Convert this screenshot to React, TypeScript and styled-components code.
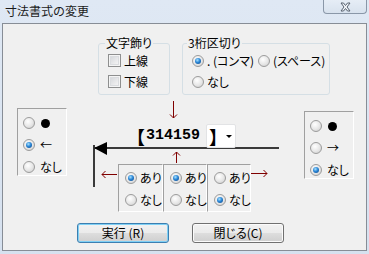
import React from "react";
import styled, { createGlobalStyle } from "styled-components";

const GlobalStyle = createGlobalStyle`
  html, body {
    margin: 0;
    padding: 0;
    background: #d9e4f1;
  }
  body {
    font-family: "Noto Sans CJK JP", "DejaVu Sans", sans-serif;
    font-size: 12px;
    font-feature-settings: "palt";
    color: #000;
  }
`;

const Window = styled.div`
  width: 369px;
  height: 254px;
  background: linear-gradient(180deg, #dfe8f4 0%, #d6e1ef 100%);
  display: flex;
  flex-direction: column;
`;

const TitleBar = styled.div`
  height: 23px;
  display: flex;
  align-items: flex-start;
  flex: none;
`;

const Title = styled.div`
  padding: 3px 0 0 5px;
  line-height: 16px;
  font-size: 12px;
  font-feature-settings: normal;
  color: #1a1a1a;
  flex: 1;
`;

const CloseBtn = styled.div`
  width: 44px;
  height: 14px;
  margin-right: 2px;
  box-sizing: border-box;
  border: 1px solid #8a97a8;
  border-top: none;
  border-radius: 0 0 4px 4px;
  background: linear-gradient(180deg, #e6edf6, #d8e2ee);
  display: flex;
  align-items: center;
  justify-content: center;
`;

const Panel = styled.div`
  margin: 0 2px;
  width: 365px;
  height: 228px;
  box-sizing: border-box;
  border: 1px solid #878d96;
  background: #f0f0f0;
  display: flex;
  flex-direction: column;
`;

const TopRow = styled.div`
  margin-top: 19px;
  padding-left: 95px;
  display: flex;
  gap: 12px;
  flex: none;
`;

const Group = styled.div<{ $w: number }>`
  position: relative;
  width: ${(p) => p.$w}px;
  height: 52px;
  box-sizing: border-box;
  border: 1px solid #d5dfe5;
  border-radius: 3px;
  padding: 6px 0 0 9px;
`;

const Caption = styled.span<{ $x: number }>`
  position: absolute;
  top: -8px;
  left: ${(p) => p.$x}px;
  line-height: 14px;
  padding: 0 1px;
  background: #f0f0f0;
`;

const OptRow = styled.div<{ $gap?: number }>`
  height: 21px;
  display: flex;
  align-items: center;
  line-height: 14px;
  white-space: nowrap;
  gap: ${(p) => p.$gap ?? 3}px;
`;

const Check = styled.span`
  width: 13px;
  height: 13px;
  box-sizing: border-box;
  border: 1px solid #8e8f8f;
  background: linear-gradient(135deg, #cfd2d6 0%, #eeeeef 70%, #f7f7f7 100%);
  box-shadow: inset 0 0 0 1px #f4f4f4, inset 0 0 0 2px #dadcdf;
  flex: none;
`;

const Radio = styled.span<{ $on?: boolean }>`
  width: 12px;
  height: 12px;
  box-sizing: border-box;
  border-radius: 50%;
  border: 1px solid #9c9c9c;
  background: radial-gradient(circle at 40% 35%, #ffffff 0%, #e6e6e6 55%, #c8c8c8 100%);
  display: flex;
  align-items: center;
  justify-content: center;
  flex: none;
  &::after {
    content: "";
    display: ${(p) => (p.$on ? "block" : "none")};
    width: 6px;
    height: 6px;
    border-radius: 50%;
    background: radial-gradient(circle at 40% 35%, #a8e2ff 0%, #2a86d6 45%, #0b3f7e 100%);
  }
`;

const Pair = styled.span<{ $ml?: number }>`
  display: flex;
  align-items: center;
  gap: 3px;
  margin-left: ${(p) => p.$ml ?? 0}px;
`;

const MiddleRow = styled.div`
  margin-top: 3px;
  display: flex;
  align-items: flex-start;
  flex: none;
`;

const SideBox = styled.div<{ $top: number; $left: number }>`
  margin-top: ${(p) => p.$top}px;
  margin-left: ${(p) => p.$left}px;
  width: 50px;
  height: 68px;
  box-sizing: border-box;
  border: 1px solid;
  border-color: #a0a0a0 #ffffff #ffffff #a0a0a0;
  padding: 3px 0 0 5px;
  flex: none;
`;

const SideRow = styled(OptRow)`
  height: 22px;
  gap: 5px;
`;

const Dot = styled.span`
  width: 9px;
  height: 9px;
  border-radius: 50%;
  background: #000;
  margin-left: 1px;
`;

const Diagram = styled.div`
  position: relative;
  width: 186px;
  height: 114px;
  margin-left: 26px;
  flex: none;
`;

const Art = styled.svg`
  position: absolute;
  left: 0;
  top: 0;
`;

const ValueRow = styled.div`
  position: relative;
  margin-top: 26px;
  height: 24px;
  display: flex;
  align-items: center;
  padding-left: 34px;
`;

const ValueText = styled.span`
  font-family: "Liberation Mono", monospace;
  font-weight: bold;
  font-size: 15px;
  line-height: 18px;
  width: 79px;
  white-space: nowrap;
`;

const Bracket = styled.span`
  display: inline-block;
  font-family: "Noto Sans CJK JP", sans-serif;
  font-feature-settings: normal;
  font-weight: 700;
  font-size: 18px;
  line-height: 18px;
  width: 18px;
  margin-right: 1px;
  vertical-align: top;
`;

const Combo = styled.div`
  width: 30px;
  height: 24px;
  box-sizing: border-box;
  border: 1px solid #e2e3e5;
  border-radius: 2px;
  background: #fff;
  display: flex;
  align-items: center;
`;

const ComboText = styled.span`
  font-feature-settings: normal;
  font-weight: 700;
  font-size: 18px;
  line-height: 18px;
  width: 16px;
  margin-left: 2px;
  white-space: nowrap;
`;

const Caret = styled.span`
  width: 0;
  height: 0;
  margin-left: 1px;
  border-left: 3px solid transparent;
  border-right: 3px solid transparent;
  border-top: 3px solid #000;
`;

const Boxes = styled.div`
  position: relative;
  margin: 16px 0 0 25px;
  display: flex;
`;

const Box = styled.div<{ $w: number }>`
  width: ${(p) => p.$w}px;
  height: 48px;
  box-sizing: border-box;
  border: 1px solid;
  border-color: #a0a0a0 #ffffff #ffffff #a0a0a0;
  padding: 2px 0 0 6px;
`;

const BoxRow = styled(OptRow)`
  height: 22px;
  gap: 3px;
`;

const ButtonRow = styled.div`
  margin-top: 11px;
  padding-left: 74px;
  display: flex;
  gap: 23px;
`;

const Button = styled.div<{ $def?: boolean }>`
  width: 92px;
  height: 20px;
  box-sizing: border-box;
  border: 1px solid ${(p) => (p.$def ? "#3c7fb1" : "#707070")};
  border-radius: 3px;
  background: linear-gradient(180deg, #f2f2f2 0%, #ebebeb 48%, #dddddd 52%, #cfcfcf 100%);
  box-shadow: inset 0 0 0 1px ${(p) => (p.$def ? "#7fd0f5" : "#fbfbfb")};
  display: flex;
  align-items: center;
  justify-content: center;
  line-height: 14px;
`;

const RED = "#800000";

const DiagramArt = () => (
  <Art width={186} height={114} viewBox="0 0 186 114">
    <g stroke={RED} strokeWidth={1} fill="none">
      <path d="M80.5 3V20M77 16.5L80.5 20L84 16.5" />
      <path d="M83.5 54V65M80 57.5L83.5 54L87 57.5" />
      <path d="M9 76.5H24M12.5 73L9 76.5L12.5 80" />
      <path d="M157 75.5H174M170.5 72L174 75.5L170.5 79" />
    </g>
    <rect x={0} y={49} width={186} height={2} fill="#3a3a3a" />
    <rect x={0} y={47} width={2} height={42} fill="#3a3a3a" />
    <polygon points="1,50 14,44 14,57" fill="#000" />
  </Art>
);

const App = () => {
  return (
    <Window>
      <GlobalStyle />
      <TitleBar>
        <Title>寸法書式の変更</Title>
        <CloseBtn>
          <svg width="11" height="10" viewBox="0 0 11 10">
            <path
              d="M1 1H3.5L5.5 3.5L7.5 1H10L7 5L10 9H7.5L5.5 6.5L3.5 9H1L4 5Z"
              fill="#f4f7fb"
              stroke="#56616f"
              strokeWidth={1}
              strokeLinejoin="round"
            />
          </svg>
        </CloseBtn>
      </TitleBar>
      <Panel>
        <TopRow>
          <Group $w={72}>
            <Caption $x={6}>文字飾り</Caption>
            <OptRow>
              <Check />
              上線
            </OptRow>
            <OptRow>
              <Check />
              下線
            </OptRow>
          </Group>
          <Group $w={148}>
            <Caption $x={4}>3桁区切り</Caption>
            <OptRow $gap={0}>
              <Pair>
                <Radio $on />
                <span>. (コンマ)</span>
              </Pair>
              <Pair $ml={4}>
                <Radio />
                <span>(スペース)</span>
              </Pair>
            </OptRow>
            <OptRow>
              <Radio />
              なし
            </OptRow>
          </Group>
        </TopRow>

        <MiddleRow>
          <SideBox $top={10} $left={14}>
            <SideRow>
              <Radio />
              <Dot />
            </SideRow>
            <SideRow>
              <Radio $on />
              ←
            </SideRow>
            <SideRow>
              <Radio />
              なし
            </SideRow>
          </SideBox>

          <Diagram>
            <DiagramArt />
            <ValueRow>
              <ValueText>
                <Bracket>【</Bracket>314159
              </ValueText>
              <Combo>
                <ComboText>】</ComboText>
                <Caret />
              </Combo>
            </ValueRow>
            <Boxes>
              {[45, 44, 44].map((w, i) => (
                <Box key={i} $w={w}>
                  <BoxRow>
                    <Radio $on={i < 2} />
                    あり
                  </BoxRow>
                  <BoxRow>
                    <Radio $on={i === 2} />
                    なし
                  </BoxRow>
                </Box>
              ))}
            </Boxes>
          </Diagram>

          <SideBox $top={13} $left={25}>
            <SideRow>
              <Radio />
              <Dot />
            </SideRow>
            <SideRow>
              <Radio />
              →
            </SideRow>
            <SideRow>
              <Radio $on />
              なし
            </SideRow>
          </SideBox>
        </MiddleRow>

        <ButtonRow>
          <Button $def>実行 (R)</Button>
          <Button>閉じる(C)</Button>
        </ButtonRow>
      </Panel>
    </Window>
  );
};

export default App;
